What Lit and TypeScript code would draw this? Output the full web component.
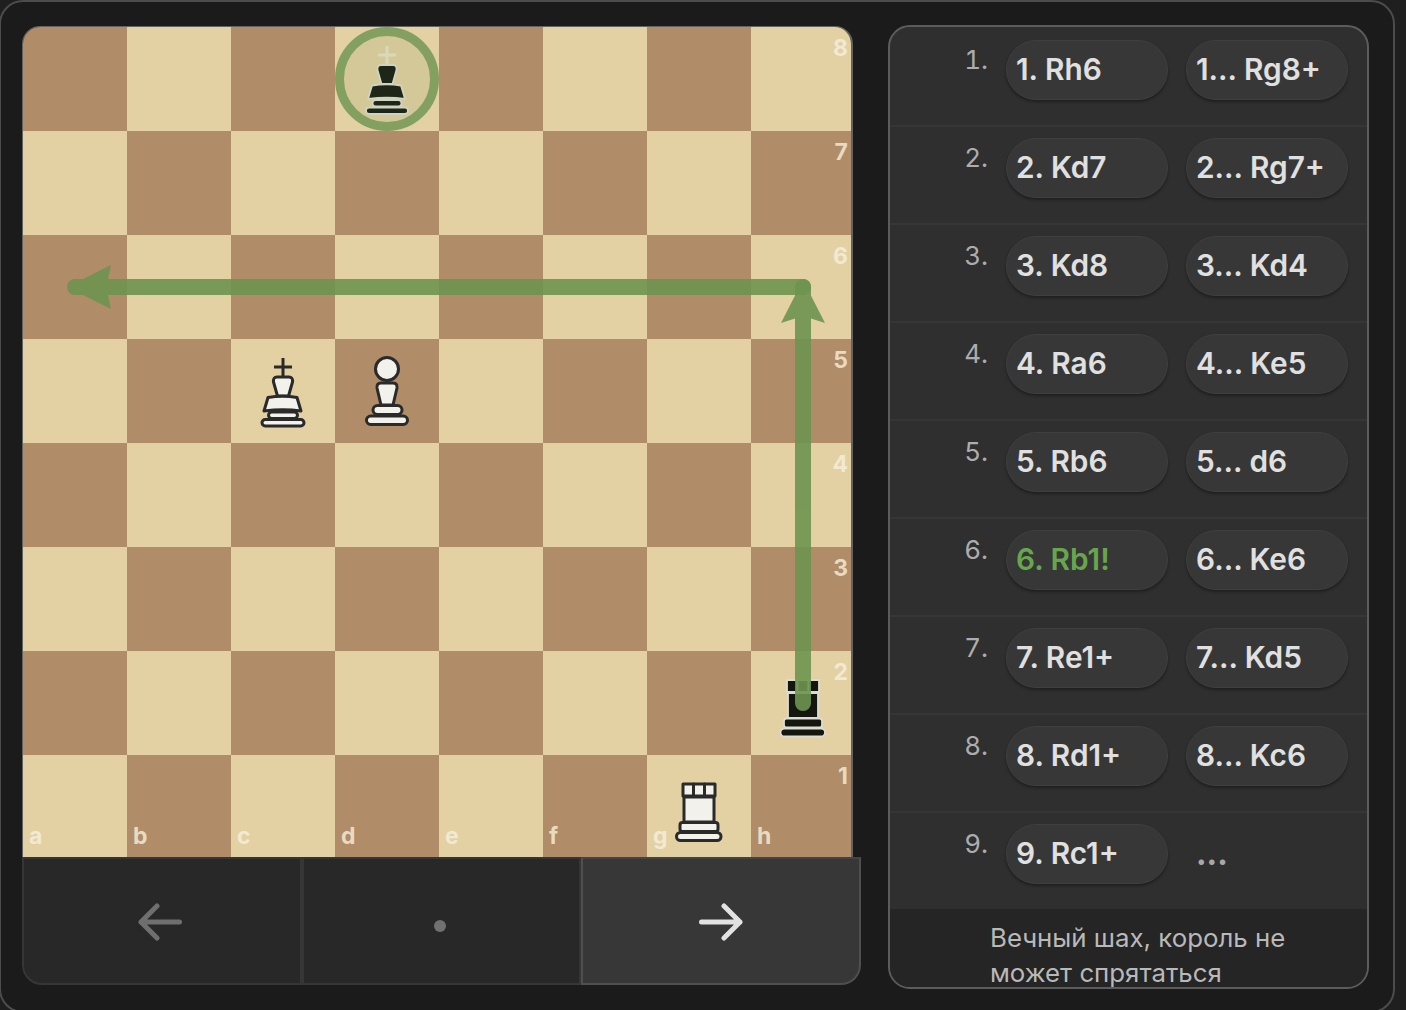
import { LitElement, html, css, svg } from "lit";
import { customElement } from "lit/decorators.js";

const WP = { s: "#2a2a2a", f: "#f2f1ec", w: 3 };
const BP = { s: "#dcdcd2", f: "#14170f", w: 1.8 };

function kingShape(c: { s: string; f: string; w: number }) {
  const crossStroke = c === BP ? "#e9e2c6" : "#2a2a2a";
  return svg`
    <path d="M52 19V37M43 28H61" fill="none" stroke=${crossStroke} stroke-width="3"/>
    <g fill=${c.f} stroke=${c.s} stroke-width=${c.w} stroke-linejoin="round">
      <path d="M46 38H58Q62 38 61.500 43L57.500 57H46.500L42.500 43Q42 38 46 38Z"/>
      <path d="M37 58.500Q52 56 66 58.500L70 72Q52 69.500 33 72Z"/>
      <rect x="37.500" y="73" width="29" height="6.500" rx="3.200"/>
      <rect x="31" y="80.500" width="42" height="6.500" rx="3.200"/>
    </g>`;
}
function pawnShape(c: { s: string; f: string; w: number }) {
  return svg`<g fill=${c.f} stroke=${c.s} stroke-width=${c.w} stroke-linejoin="round">
    <circle cx="52" cy="30" r="11.500"/>
    <path d="M46 44H58Q62.500 44 62 49L58 66H46L42 49Q41.500 44 46 44Z"/>
    <rect x="38" y="66.500" width="29" height="9" rx="4.500"/>
    <rect x="31.500" y="77" width="41" height="8.500" rx="4.200"/>
  </g>`;
}
function rookShape(c: { s: string; f: string; w: number }) {
  return svg`<g fill=${c.f} stroke=${c.s} stroke-width=${c.w} stroke-linejoin="round">
    <path d="M37 42H67V67H37Z"/>
    <rect x="36" y="29" width="10.500" height="12"/>
    <rect x="46.500" y="29" width="11" height="12"/>
    <rect x="57.500" y="29" width="10.500" height="12"/>
    <rect x="33" y="67.500" width="38" height="9" rx="2.500"/>
    <rect x="29.500" y="77.500" width="44.500" height="8" rx="4"/>
  </g>`;
}

const PIECES: Record<string, () => unknown> = {
  d8: () => kingShape(BP),
  c5: () => kingShape(WP),
  d5: () => pawnShape(WP),
  h2: () => rookShape(BP),
  g1: () => rookShape(WP),
};

const MOVES: [string, string | null][] = [
  ["1. Rh6", "1... Rg8+"],
  ["2. Kd7", "2... Rg7+"],
  ["3. Kd8", "3... Kd4"],
  ["4. Ra6", "4... Ke5"],
  ["5. Rb6", "5... d6"],
  ["6. Rb1!", "6... Ke6"],
  ["7. Re1+", "7... Kd5"],
  ["8. Rd1+", "8... Kc6"],
  ["9. Rc1+", null],
];

@customElement("app-root")
export class AppRoot extends LitElement {
  static styles = css`
    :host {
      display: block;
      width: 1406px;
      height: 1010px;
      overflow: hidden;
      background: #1f1f1f;
      font-family: Inter, "Liberation Sans", sans-serif;
    }
    .frame {
      box-sizing: border-box;
      width: 1396px;
      height: 1013px;
      margin-left: -1px;
      padding: 23px 0 0 21px;
      display: flex;
      align-items: flex-start;
      gap: 27px;
      background: #1b1b1b;
      border: 2px solid #4c4c4c;
      border-radius: 24px;
    }
    .left {
      width: 839px;
      display: flex;
      flex-direction: column;
      align-items: flex-start;
      margin-top: 1px;
    }
    .board {
      position: relative;
      box-sizing: border-box;
      width: 831px;
      height: 831px;
      overflow: hidden;
      border: solid #636363;
      border-width: 1px 2px 0 1px;
      border-radius: 18px 18px 0 0;
    }
    .grid {
      display: grid;
      grid-template-columns: repeat(8, 104px);
      grid-auto-rows: 104px;
      width: 832px;
    }
    .sq { position: relative; }
    .sq.l { background: #e3d0a3; color: #f2e9d3; }
    .sq.d { background: #b08c68; color: #e9dac2; }
    .sq svg {
      position: absolute;
      inset: 0;
      width: 104px;
      height: 104px;
    }
    .num, .let {
      position: absolute;
      font-size: 23px;
      line-height: 22px;
      font-weight: 700;
    }
    .num { top: 10px; right: 7px; }
    .let { bottom: 12px; left: 6px; }
    .arrows {
      position: absolute;
      left: 0;
      top: 0;
      width: 832px;
      height: 832px;
      pointer-events: none;
    }
    .nav {
      display: flex;
      width: 839px;
      height: 128px;
    }
    .nb {
      box-sizing: border-box;
      flex: 1;
      display: flex;
      align-items: center;
      justify-content: center;
      background: #282828;
      border: 2px solid #363636;
      color: #6f6f6f;
    }
    .nb.first { border-radius: 0 0 0 20px; }
    .nb.last {
      border-radius: 0 0 20px 0;
      background: #373737;
      border-color: #4f4f4f;
      border-top-color: #444;
      color: #e2e2e2;
    }
    .nb svg { width: 44px; height: 38px; margin-top: 2px; }
    .nb.first svg { margin-right: 3px; }
    .dot {
      width: 12px;
      height: 12px;
      border-radius: 50%;
      background: #707070;
      margin: 10px 4px 0 0;
    }
    .panel {
      box-sizing: border-box;
      width: 481px;
      height: 964px;
      overflow: hidden;
      background: #2f2f2f;
      border: 2px solid #5c5c5c;
      border-radius: 22px;
    }
    .row {
      box-sizing: border-box;
      height: 98px;
      padding: 11px 18px 0 0;
      display: grid;
      grid-template-columns: 98px 162px 162px;
      column-gap: 18px;
      border-bottom: 2px solid #363636;
    }
    .row:first-child { height: 100px; padding-top: 13px; }
    .row:nth-child(9) { border-bottom: 0; height: 96px; }
    .n {
      text-align: right;
      font-size: 26px;
      line-height: 40px;
      color: #adadad;
      font-variant-numeric: tabular-nums;
    }
    .mv {
      box-sizing: border-box;
      height: 60px;
      padding: 0 9px;
      border-radius: 30px;
      background: #373737;
      border: 1px solid #3f3f3f;
      box-shadow: 0 2px 3px rgba(0, 0, 0, 0.35);
      font-size: 29.8px;
      line-height: 57px;
      font-weight: 600;
      color: #e0e0e0;
      white-space: nowrap;
    }
    .mv.best { color: #68a64e; }
    .more {
      padding: 0 10px;
      font-size: 30px;
      line-height: 60px;
      font-weight: 800;
      color: #a8a8a8;
    }
    .foot {
      box-sizing: border-box;
      height: 79px;
      padding: 11px 60px 0 100px;
      background: #252525;
      font-size: 25.8px;
      line-height: 35px;
      color: #b9b9b9;
    }
  `;

  private renderSquares() {
    const files = "abcdefgh";
    const out = [];
    for (let r = 8; r >= 1; r--) {
      for (let f = 0; f < 8; f++) {
        const name = files[f] + r;
        const dark = (f + r) % 2 === 0;
        const piece = PIECES[name];
        out.push(html`<div class="sq ${dark ? "d" : "l"}">
          ${name === "d8"
            ? html`<svg viewBox="0 0 104 104">
                ${piece()}
                <circle cx="52" cy="52" r="47.500" fill="rgba(110,148,80,.12)" stroke="#84a060" stroke-width="9"/>
              </svg>`
            : piece
            ? html`<svg viewBox="0 0 104 104">${piece()}</svg>`
            : ""}
          ${f === 7 ? html`<span class="num">${r}</span>` : ""}
          ${r === 1 ? html`<span class="let">${files[f]}</span>` : ""}
        </div>`);
      }
    }
    return out;
  }

  render() {
    return html`<div class="frame">
      <div class="left">
        <div class="board">
          <div class="grid">${this.renderSquares()}</div>
          <svg class="arrows" viewBox="0 0 832 832">
            <g opacity="0.9">
              <path d="M780 676V260" fill="none" stroke="#6e9450" stroke-width="16" stroke-linecap="round"/>
              <path d="M780 253L802 296L788 291.500H772L758 296Z" fill="#6e9450"/>
            </g>
            <g opacity="0.9">
              <path d="M780 260H52" fill="none" stroke="#6e9450" stroke-width="16" stroke-linecap="round"/>
              <path d="M44 260L88 238L85 252V268L88 282Z" fill="#6e9450"/>
            </g>
          </svg>
        </div>
        <div class="nav">
          <div class="nb first">
            <svg viewBox="0 0 44 38"><path d="M41.500 19H3M19 3L3 19L19 35" fill="none" stroke="currentColor" stroke-width="5" stroke-linecap="round" stroke-linejoin="round"/></svg>
          </div>
          <div class="nb"><span class="dot"></span></div>
          <div class="nb last">
            <svg viewBox="0 0 44 38"><path d="M2.500 19H41M25 3L41 19L25 35" fill="none" stroke="currentColor" stroke-width="5" stroke-linecap="round" stroke-linejoin="round"/></svg>
          </div>
        </div>
      </div>
      <div class="panel">
        ${MOVES.map(
          ([w, b], i) => html`<div class="row">
            <div class="n">${i + 1}.</div>
            <div class="mv ${i === 5 ? "best" : ""}">${w}</div>
            ${b ? html`<div class="mv">${b}</div>` : html`<div class="more">...</div>`}
          </div>`
        )}
        <div class="foot">Вечный шах, король не может спрятаться</div>
      </div>
    </div>`;
  }
}
